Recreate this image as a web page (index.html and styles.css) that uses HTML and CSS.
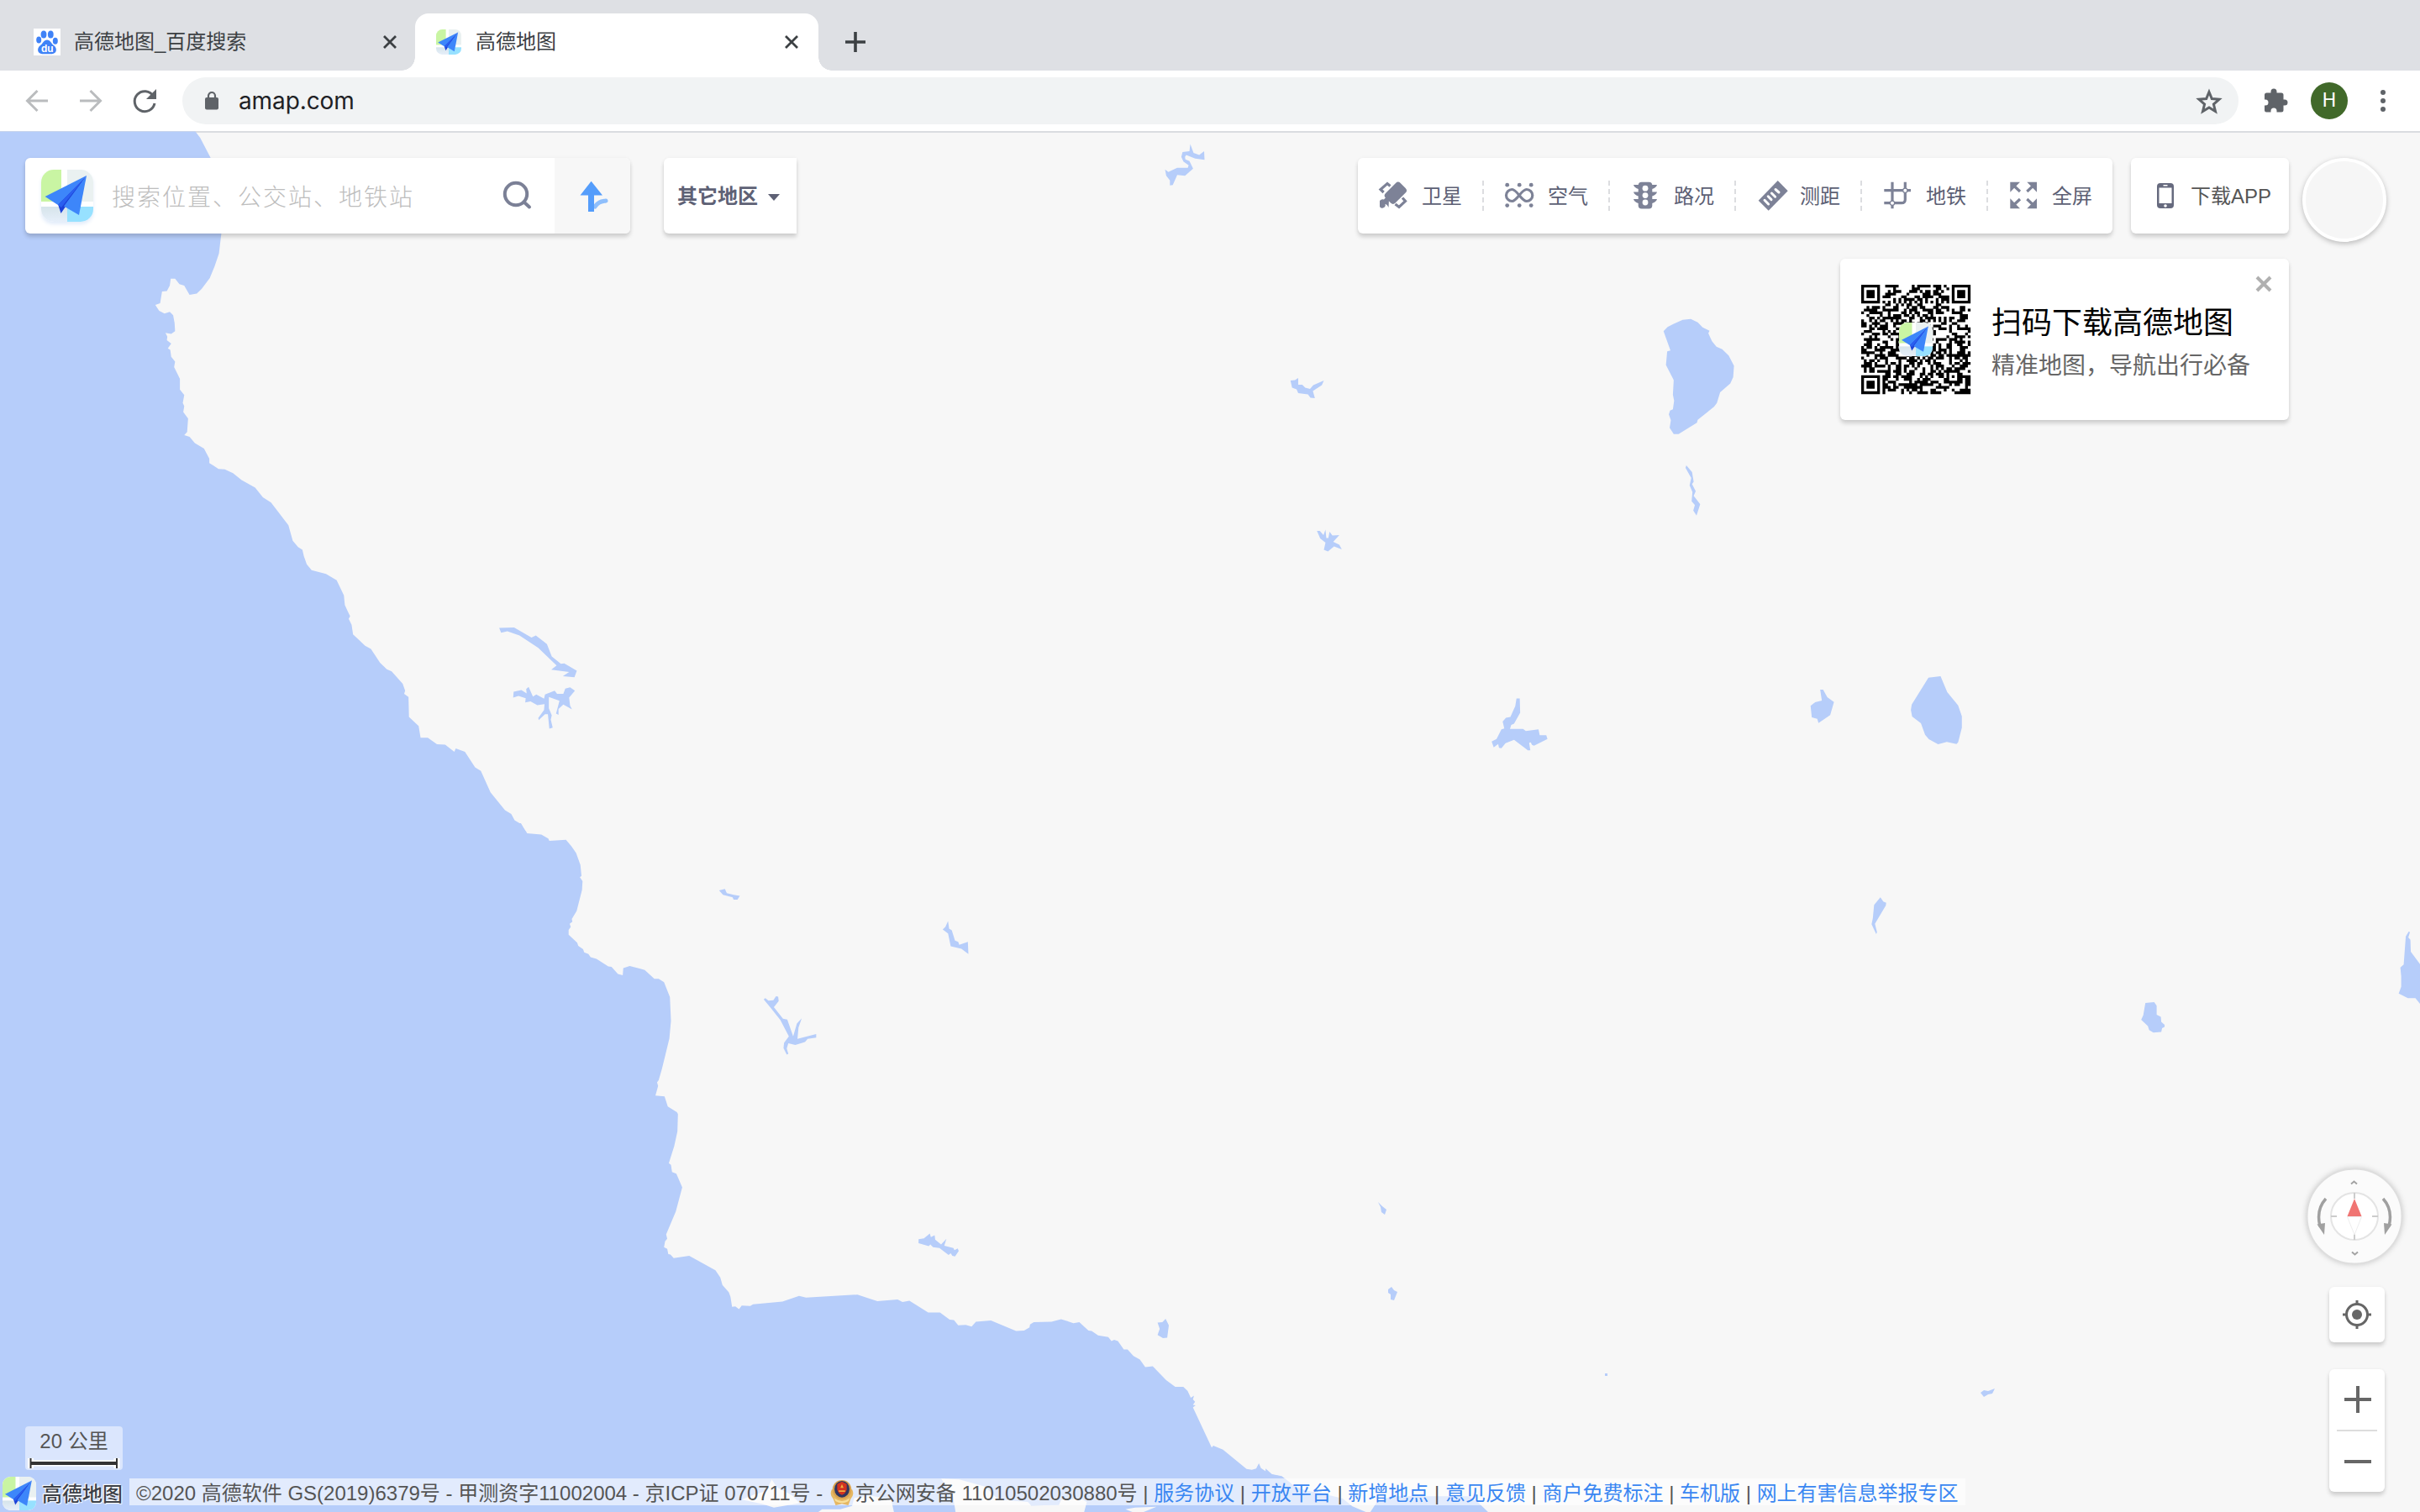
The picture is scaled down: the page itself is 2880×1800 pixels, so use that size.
FILE: index.html
```html
<!DOCTYPE html>
<html lang="zh-CN">
<head>
<meta charset="utf-8">
<title>高德地图</title>
<link rel="stylesheet" href="styles.css">
</head>
<body>
<svg class="defs" aria-hidden="true">
  <defs>
    <clipPath id="tile"><rect width="62" height="62" rx="15"/></clipPath>
    <linearGradient id="tileFade" x1="0" y1="0" x2="0" y2="1"><stop offset="0" stop-color="#d6e4ea"/><stop offset="1" stop-color="#e6effa"/></linearGradient>
    <symbol id="amap" viewBox="0 0 62 62">
      <g clip-path="url(#tile)">
        <rect width="62" height="62" fill="#fff"/>
        <rect width="24" height="38" fill="#c9f5a3"/>
        <rect x="31" width="31" height="38" fill="#eaf1f1"/>
        <rect y="44" width="31" height="18" fill="url(#tileFade)"/>
        <rect x="31" y="44" width="31" height="18" fill="#97e1ff"/>
      </g>
      <path d="M54 7 20 41 23.5 52 29 44Z" fill="#1c41d8"/>
      <path d="M54 7 4.6 32 20 42Z" fill="#3d86fa"/>
      <path d="M54 7 27 43.500 45 54Z" fill="#3d86fa"/>
      <path d="M54 7 20 42 24 45Z" fill="#2a5ff0"/>
    </symbol>
  </defs>
</svg>

<header class="tabs">
  <div class="tab">
    <svg class="favicon" viewBox="0 0 32 32"><rect width="32" height="32" fill="#fff"/><g fill="#3f82f7"><ellipse cx="12" cy="7" rx="3.400" ry="4.500"/><ellipse cx="20.300" cy="7" rx="3.400" ry="4.500"/><ellipse cx="6.200" cy="13.500" rx="3" ry="4"/><ellipse cx="25.800" cy="14.800" rx="3" ry="4"/><path d="M16 13.500C12 13.500 11 18 8 20c-5 4-3 10 2 10.200h12c5-.2 7-6.200 2-10.200-3-2-4-6.500-8-6.500Z"/></g><text class="du" x="16.300" y="27.500" text-anchor="middle">du</text></svg>
    <span class="tab-title">高德地图_百度搜索</span>
    <svg class="close" viewBox="0 0 16 16"><path d="M1 1 15 15M15 1 1 15"/></svg>
  </div>
  <div class="tab active">
    <svg class="favicon" viewBox="0 0 62 62"><use href="#amap"/></svg>
    <span class="tab-title">高德地图</span>
    <svg class="close" viewBox="0 0 16 16"><path d="M1 1 15 15M15 1 1 15"/></svg>
  </div>
  <svg class="newtab" viewBox="0 0 24 24"><path d="M12 0V24M0 12H24"/></svg>
</header>

<nav class="toolbar">
  <svg class="nav-ico dim" viewBox="0 0 28 28"><path d="M27 14H3M14.500 2 2.500 14l12 12"/></svg>
  <svg class="nav-ico dim" viewBox="0 0 28 28"><path d="M1 14H25M13.500 2l12 12-12 12"/></svg>
  <svg class="nav-ico" viewBox="0 0 28 28"><path d="M24.500 8.500A12 12 0 1 0 26 17"/><path d="M28 0V12H16Z" fill="#5f6368" stroke="none"/></svg>
  <div class="address">
    <svg class="lock" viewBox="0 0 16 22"><rect y="7" width="16" height="14.500" rx="2" fill="#5f6368"/><path d="M4 8V5a4 4 0 0 1 8 0v3" fill="none" stroke="#5f6368" stroke-width="2.200"/></svg>
    <span class="url">amap.com</span>
    <svg class="star" viewBox="0 0 30 29"><path d="M15 3.500 18.300 11.600 27 12.300 20.400 18 22.500 26.500 15 22 7.500 26.500 9.600 18 3 12.300 11.700 11.600Z"/></svg>
  </div>
  <svg class="puzzle" viewBox="0 0 30 30"><path d="M2 8a2.500 2.500 0 0 1 2.500-2.500H9.500V4a3.500 3.500 0 0 1 7 0v1.500H22A2.500 2.500 0 0 1 24.500 8v5.500H26a3.500 3.500 0 0 1 0 7H24.500v5.500A2.500 2.500 0 0 1 22 28.500H16.500V27a3.500 3.500 0 0 0-7 0v1.500H4A2.200 2.200 0 0 1 2 26.500V20.500H3a3.500 3.500 0 0 0 0-7H2Z" fill="#5f6368"/></svg>
  <div class="profile">H</div>
  <svg class="menu" viewBox="0 0 6 26"><circle cx="3" cy="3" r="3"/><circle cx="3" cy="13" r="3"/><circle cx="3" cy="23" r="3"/></svg>
</nav>

<main class="map">
  <svg class="canvas" viewBox="0 158 2880 1642">
    <g class="water">
      <!-- coast, north -->
      <path transform="translate(0 150) scale(.57398 .63776)" d="M0 10H405L415 22 437 60 450 120 459 200 454 238 445 262 435 284 418 304 408 313 393 315 382 298 372 295 363 285 354 285 352 298 346 308 336 309 332 331 322 334 330 345 341 350 352 347 359 353 362 368 363 383 355 388 343 386 347 393 346 400 355 406 348 415 353 418 355 431 363 440 361 450 373 472 373 492 382 502 379 517 382 523 380 534 390 546 388 571 382 577 393 580 404 592 423 602 434 621 434 629 453 640 466 641 483 648 501 661 529 675 545 693 562 703 598 745 607 774 618 786 627 791 630 803 636 818 646 829 676 836 698 848 713 876 715 894 722 908 726 915 723 920 729 931 732 949 757 970 769 976 788 1002 802 1014 812 1018 835 1041 840 1054 838 1060 847 1066 848 1103 868 1120 872 1142 887 1142 906 1154 923 1155 942 1168 945 1162 964 1168 985 1197 997 1204 1017 1244 1047 1277 1060 1284 1067 1296 1078 1302 1093 1320H0Z"/>
      <!-- coast, centre and south -->
      <path transform="translate(560 980) scale(.63776 .52296)" d="M-880 0H94L105 23 132 26 145 35 147 40 178 38 188 52 197 68 205 95 207 120 204 123 209 132 208 152 198 200 189 218 190 224 185 229 187 236 183 243 183 254 199 272 201 279 210 287 212 294 220 298 224 305 235 309 257 326 263 327 275 343 284 346 285 330 297 325 325 334 343 354 351 354 361 362 372 396 374 450 371 490 357 560 351 585 348 590 350 598 345 620 362 622 368 645 385 658 387 662 386 702 380 735 370 774 374 778 376 794 384 798 395 829 383 884 365 936 367 946 363 952 361 965 367 969 369 981 373 982 379 990 408 985 457 1018 466 1034 470 1051 482 1068 485 1078 488 1101 494 1100 501 1106 506 1098 522 1099 527 1095 582 1089 613 1076 626 1080 722 1073 759 1088 797 1084 806 1090 819 1087 854 1114 876 1114 894 1130 902 1131 910 1143 924 1142 935 1146 943 1135 971 1132 1018 1156 1033 1155 1043 1148 1044 1141 1051 1136 1084 1135 1102 1129 1125 1138 1136 1136 1153 1155 1159 1156 1171 1166 1190 1170 1196 1179 1201 1176 1208 1179 1219 1198 1226 1198 1237 1213 1249 1221 1259 1238 1273 1236 1298 1268 1315 1283 1330 1283 1338 1292 1344 1308 1350 1303 1348 1312 1352 1317 1348 1324 1353 1325 1348 1330 1383 1421 1386 1417 1404 1426 1448 1470 1458 1472 1466 1469 1471 1457 1475 1468 1492 1482 1514 1487 1530 1502V1568H-880Z"/>
      <path transform="translate(1200 1680) scale(.7653 .3333)" d="M400 205 410 225 425 232 445 268 465 285 485 292 520 312 535 340 556 360H400Z"/>
      <path transform="translate(1200 1680) scale(.7653 .3333)" d="M563 360 575 318 600 304 715 304 730 325 746 360Z"/>
      <!-- reservoirs, west -->
      <g transform="translate(0 150) scale(.57398 .63776)">
        <path d="M1035 937 1066 936 1102 955 1111 951 1134 967 1144 990 1163 1004 1170 1003 1196 1017 1191 1029 1167 1027 1180 1019 1143 1015 1154 1007 1116 974 1077 951 1052 943 1039 946Z"/>
        <path d="M1064 1067 1065 1056 1081 1053 1092 1059 1091 1051 1096 1047 1105 1065 1112 1061 1128 1069 1130 1061 1150 1054 1155 1060 1168 1060 1172 1050 1182 1048 1192 1054 1180 1067 1182 1082 1186 1089 1168 1080 1158 1088 1158 1099 1153 1097 1160 1073 1138 1066 1138 1087 1144 1100 1142 1108 1146 1123 1139 1125 1136 1098 1130 1098 1117 1109 1116 1105 1128 1090 1129 1079 1114 1081 1100 1074 1089 1076 1090 1068 1075 1064Z"/>
        <path d="M1491 1427 1503 1424 1507 1432 1521 1435 1534 1437 1529 1444 1521 1444 1519 1440 1499 1435Z"/>
      </g>
      <g transform="translate(560 980) scale(.63776 .52296)">
        <path d="M891 223 893 240 898 244 904 267 910 270 912 277 928 270 929 298 916 286 896 280 891 251 881 242 886 236Z"/>
        <path d="M547 401 550 398 556 404 565 403 570 394 574 395 575 405 566 419 583 445 591 447 602 485 609 456 618 444 612 465 610 491 645 480 645 488 629 491 624 498 606 505 593 501 590 513 593 525 590 527 584 512 585 500 594 485 578 448 560 420Z"/>
        <path d="M836 947 846 945 857 934 859 942 866 938 867 948 878 959 888 946 884 962 901 967 903 972 909 968 911 974 904 986 899 985 896 979 892 983 875 967 863 965 858 959 855 963 836 956Z"/>
        <path d="M1282 1137 1291 1136 1297 1128 1303 1143 1300 1171 1292 1172 1282 1165 1286 1151Z"/>
      </g>
      <!-- lakes, north -->
      <g transform="translate(1370 160) scale(.48469 .49745)">
        <path d="M34 84 42 90 64 80H90L92 74 79 65 74 54 77 42 94 40 96 23 104 44 118 49 130 40 131 61 108 58 86 49 83 54 84 60 94 64 103 82 83 99 64 97 53 121 46 122 46 110 37 99Z"/>
        <path d="M342 589 353 588 361 583 361 599 371 599 378 606 390 609 398 600 424 589 419 600 397 614 402 631 391 630 385 622 361 619 357 610 346 606Z"/>
        <path d="M407 949H414L423 959 428 946 430 966 435 966 438 951 445 960 462 959 447 975 462 982 468 993 449 986 434 998 424 994 428 977 415 967Z"/>
        <path d="M1258 471 1268 461 1282 454 1305 444 1325 442 1342 450 1354 462 1371 470 1368 476 1377 495 1388 508 1402 514 1418 529 1431 554 1429 581 1422 596 1397 617 1389 643 1382 652 1342 683 1340 690 1295 717H1283L1273 702 1276 684 1271 670 1274 661 1281 658 1284 637 1281 623 1283 588 1264 552 1267 519 1275 517Z"/>
        <path d="M1314 792 1328 808 1332 831 1328 837 1337 854 1332 865 1348 885 1339 912 1331 900 1335 887 1327 878 1329 856 1322 840 1326 822 1312 798Z"/>
        <path d="M897 1350H905L906 1384 891 1410 884 1413 881 1423H913L920 1428 951 1424 954 1438 970 1438 973 1447 940 1463 935 1461 932 1455 928 1456 931 1474 925 1474 891 1449 870 1457 860 1469 854 1468 852 1459 841 1467 836 1453 848 1447 860 1424 867 1422 863 1405 871 1396 882 1394 894 1368Z"/>
      </g>
      <!-- lakes, east -->
      <g transform="translate(2100 780) scale(.49745 .3333)">
        <path d="M133 123H140L150 150 166 167 157 214 129 242 126 227 113 222 110 181 121 168 137 162Z"/>
        <path d="M392 80 421 75 437 132 463 179 472 218V259L463 311 459 317 436 310 415 318 393 300 384 284 374 243 353 219 350 196 352 176Z"/>
        <path d="M277 865 284 880 291 884 290 894 264 959 269 989 267 996 256 961 259 939 262 892Z"/>
        <path d="M911 1242 932 1239 938 1252V1284L948 1292 949 1310 957 1320V1328L951 1332 949 1346 930 1348 920 1339 917 1325 901 1302 906 1286Z"/>
        <path d="M1534 1004 1541 987 1544 989 1540 1008 1545 1016 1546 1059 1568 1103V1245L1557 1225H1539L1517 1208 1523 1184V1147L1521 1115 1529 1105Z"/>
      </g>
      <path d="M1640 1431l5 5 5 4-2 6-4-3-1-6zM1652 1535l4-3 3 4 4 2-2 5-2 5-4-1v-6l-3-2zM1910 1635h3v3h-3zM2357 1658l4-3 5 1 8-3-3 6-5 1-5 3z"/>
    </g>
    <g class="land" transform="translate(560 980) scale(.63776 .52296)">
      <path d="M506 1540 530 1528 552 1520 562 1494 572 1512 600 1530 614 1548 566 1558 545 1550Z"/>
      <path d="M649 1568 656 1562 690 1562 712 1554 716 1536 745 1530 785 1540 790 1568Z" />
      <path d="M878 1492 912 1494 960 1510 985 1540 1040 1545 1046 1553 1098 1552 1102 1540 1140 1538 1150 1545 1145 1568H905L900 1530Z"/>
      <path d="M1222 1562 1240 1558 1280 1556 1256 1568H1235Z"/>
    </g>
  </svg>

  <section class="top">
    <div class="search card">
      <svg class="brand" viewBox="0 0 62 62"><use href="#amap"/></svg>
      <span class="placeholder">搜索位置、公交站、地铁站</span>
      <svg class="glass" viewBox="0 0 36 36"><circle cx="16" cy="16" r="13.200"/><path d="M25.500 25.500 32 31.500"/></svg>
      <div class="route">
        <svg viewBox="0 0 34 38"><path d="M18 31C22 25 26 25 31 24" fill="none" stroke="#8fbffc" stroke-width="5" stroke-linecap="round"/><path d="M13.600 .7 27 17.500H17V37H10V17.500H.5Z" fill="#559dfb"/></svg>
      </div>
    </div>
    <div class="region card"><span class="label">其它地区</span><i class="caret"></i></div>
    <div class="tools card">
      <div class="tool"><svg viewBox="0 0 36 36"><rect x="8.300" y="6.500" width="25" height="16.500" rx="4" transform="rotate(-45 20.800 14.700)"/><path class="line" d="M6.600 14 3 10.500 11 3.500 14.500 6.500M29 20.500 32.500 24.500 25 31.500 20.500 28"/><path d="M2 24Q4 21.500 7 22.500L10 19 13 22 12.500 32Q10.500 28 8.500 28 9.500 31 6 32.500 3 33.500 2 31Z"/></svg><span class="label">卫星</span></div>
      <div class="tool"><svg viewBox="0 0 36 36"><circle cx="3.700" cy="5.200" r="2.400"/><circle cx="18.200" cy="5.200" r="2.400"/><circle cx="32.200" cy="5.200" r="2.400"/><circle cx="3.700" cy="29.600" r="2.400"/><circle cx="18.200" cy="29.600" r="2.400"/><circle cx="32.200" cy="29.600" r="2.400"/><path class="line" d="M18 17.500C14 22.500 12 24.500 9.500 24.500A7 7 0 0 1 9.500 10.500C12 10.500 14 12.500 18 17.500S24 24.500 26.800 24.500A7 7 0 0 0 26.800 10.500C24 10.500 22 12.500 18 17.500Z"/></svg><span class="label">空气</span></div>
      <div class="tool"><svg viewBox="0 0 36 36"><rect x="9.700" y="1.700" width="16.600" height="31.800" rx="4"/><path d="M4 5H32Q31 8.500 26 10V13.500H32Q31 17 26 18.500V22H32Q31 25.500 26 27H10Q5 25.500 4 22H10V18.500Q5 17 4 13.500H10V10Q5 8.500 4 5Z"/><g fill="#fff"><circle cx="18" cy="9.200" r="3.400"/><circle cx="18" cy="17.600" r="3.400"/><circle cx="18" cy="26" r="3.400"/></g></svg><span class="label">路况</span></div>
      <div class="tool"><svg viewBox="0 0 36 36"><path d="M25.700 0 37.700 12.300 14.700 35.700 2.700 23.700Z"/><path class="line white" d="M10 23.300 14.600 28M14.200 18.800 18 22.600M18.400 15 22.600 19.200M23 10.500 27 14"/></svg><span class="label">测距</span></div>
      <div class="tool"><svg viewBox="0 0 36 36"><path class="line" d="M12 1.700V33.300M2.300 11.700H34M27.300 1.700V22.500Q27.300 26.700 23 26.700H2.300"/><g class="node"><circle cx="27.300" cy="11.700" r="2.600"/><circle cx="12" cy="26.700" r="2.600"/></g></svg><span class="label">地铁</span></div>
      <div class="tool"><svg viewBox="0 0 36 36"><path d="M2.300 1.700H14L2.300 13.700ZM34 1.700H22.300L34 13.700ZM2.300 33.300H14L2.300 21.300ZM34 33.300H22.300L34 21.300Z"/><path class="line" d="M6 5.500 14 13M30.300 5.500 22.300 13M6 29.500 14 22M30.300 29.500 22.300 22"/></svg><span class="label">全屏</span></div>
    </div>
    <div class="download card">
      <svg class="phone" viewBox="0 0 20 30"><rect width="20" height="30" rx="4" fill="#666a7e"/><rect x="2.500" y="5.500" width="15" height="18.500" fill="#fff"/><circle cx="10" cy="27" r="1.800" fill="#fff"/><rect x="7.500" y="2" width="5" height="1.500" fill="#fff"/></svg>
      <span class="label">下载APP</span>
    </div>
    <div class="user"></div>
  </section>

  <aside class="promo card">
    <svg class="qr" id="qr" viewBox="0 0 41 41"></svg>
    <div class="promo-text">
      <strong>扫码下载高德地图</strong>
      <span>精准地图，导航出行必备</span>
    </div>
    <svg class="promo-close" viewBox="0 0 20 20"><path d="M2 2 18 18M18 2 2 18"/></svg>
  </aside>

  <div class="controls">
    <svg class="compass" viewBox="0 0 120 120">
      <circle cx="60" cy="60" r="56.500" fill="#fbfbfb" stroke="#dedede" stroke-width="2"/>
      <circle cx="60" cy="60" r="28" fill="#fff" stroke="#e4e4e4" stroke-width="2"/>
      <path d="M60 32v7M60 81v7M32 60h7M81 60h7" stroke="#ccc" stroke-width="2"/>
      <path d="M60 39 68.500 60H51.500Z" fill="#f07573"/>
      <path d="M51.500 60.500H68.500L60 82Z" fill="#fff" stroke="#eee"/>
      <path d="M56 21.500 59.500 18.500 63 21.500M57 102.500 60.500 105.500 64 102.500" fill="none" stroke="#a3a3a3" stroke-width="2"/>
      <path d="M26 39Q14 52 19 72M94 39Q106 52 101 72" fill="none" stroke="#a0a0a0" stroke-width="3.500"/>
      <path d="M15.500 69.500 25 68 24 82ZM104.500 69.500 95 68 96 82Z" fill="#a0a0a0"/>
    </svg>
    <div class="locate card"><svg viewBox="0 0 34 34"><circle cx="17" cy="17" r="12.500"/><path d="M17 0V5M17 29V34M0 17H5M29 17H34"/><circle cx="17" cy="17" r="6" class="dot"/></svg></div>
    <div class="zoom card">
      <svg viewBox="0 0 32 32"><path d="M16 0V32M0 16H32"/></svg>
      <i class="rule"></i>
      <svg viewBox="0 0 32 32"><path d="M0 16H32"/></svg>
    </div>
  </div>

  <div class="scale">
    <span>20 公里</span>
    <svg viewBox="0 0 108 14"><path d="M3 7H105M2.500 1V13M105 1V13" stroke="#fff" stroke-width="7"/><path d="M2 7H105" stroke="#333" stroke-width="4"/><path d="M2.500 1V13M105 1V13" stroke="#333" stroke-width="2"/></svg>
  </div>

  <footer class="foot">
    <svg class="foot-logo" viewBox="0 0 62 62"><use href="#amap"/></svg>
    <span class="wordmark">高德地图</span>
    <p class="legal">©2020 高德软件 GS(2019)6379号 - 甲测资字11002004 - 京ICP证 070711号 - <svg class="badge" viewBox="0 0 32 34"><path d="M3 13Q0 20 5 25L8 33 16 31 24 33 27 25Q32 20 29 13Z" fill="#e5b763"/><circle cx="16" cy="13" r="12" fill="#d9a24e"/><ellipse cx="16" cy="12.500" rx="9.500" ry="10.500" fill="#30365f"/><path d="M16 3 22 6V13Q21 18 16 20 11 18 10 13V6Z" fill="#d2331f"/><path d="M16 6 18 11H14ZM12 14H20V16H12Z" fill="#f0b040"/><path d="M6 24Q16 31 26 24L24 28Q16 32 8 28Z" fill="#f8df9a"/></svg>京公网安备 11010502030880号 | <a>服务协议</a> | <a>开放平台</a> | <a>新增地点</a> | <a>意见反馈</a> | <a>商户免费标注</a> | <a>车机版</a> | <a>网上有害信息举报专区</a></p>
  </footer>
</main>
<script src="qr.js"></script>
</body>
</html>
```
FILE: qr.js
```js
// Draws the download code: finder squares, timing marks, data modules and the brand tile.
(function () {
  var n = 41, seed = 90217, d = '';
  function rnd() { seed = (seed * 1103515245 + 12345) % 2147483648; return seed / 2147483648; }
  function finder(x, y, fx, fy) {
    var dx = Math.abs(x - fx - 3), dy = Math.abs(y - fy - 3), m = Math.max(dx, dy);
    return m > 4 ? null : m === 3 || m < 2;
  }
  for (var y = 0; y < n; y++) {
    for (var x = 0; x < n; x++) {
      var on = rnd() > 0.46, f = null;
      [[0, 0], [n - 7, 0], [0, n - 7]].forEach(function (p) {
        var v = finder(x, y, p[0], p[1]);
        if (v !== null) f = v;
      });
      if (f === null && (x === 6 || y === 6)) f = (x + y) % 2 === 0;
      var a = Math.max(Math.abs(x - 34), Math.abs(y - 34));
      if (f === null && a < 3) f = a !== 1;
      if (f !== null) on = f;
      if (on) d += 'M' + x + ' ' + y + 'h1.04v1.04h-1.04z';
    }
  }
  document.getElementById('qr').innerHTML = '<path d="' + d + '"/><use href="#amap" x="14.200" y="14.200" width="12.600" height="12.600"/>';
})();
```
FILE: styles.css
```css
* { box-sizing: border-box; }
body {
  margin: 0;
  width: 2880px;
  height: 1800px;
  overflow: hidden;
  display: flex;
  flex-direction: column;
  background: #f7f7f7;
  font-family: "Liberation Sans", "Noto Sans CJK SC", sans-serif;
  font-size: 24px;
}
svg { display: block; overflow: visible; flex: none; }
.defs { width: 0; height: 0; position: absolute; }

/* tab strip */
.tabs {
  height: 84px;
  background: #dee0e4;
  display: flex;
  align-items: flex-end;
}
.tab {
  display: flex;
  align-items: center;
  height: 68px;
  width: 494px;
  padding: 0 22px 0 40px;
  color: #3c4043;
}
.tab.active {
  position: relative;
  width: 480px;
  padding: 0 24px 0 25px;
  background: #fff;
  border-radius: 16px 16px 0 0;
}
.tab.active::before, .tab.active::after {
  content: "";
  position: absolute;
  bottom: 0;
  width: 16px;
  height: 16px;
}
.tab.active::before { left: -16px; background: radial-gradient(circle at 0 0, transparent 15.5px, #fff 16px); }
.tab.active::after { right: -16px; background: radial-gradient(circle at 100% 0, transparent 15.5px, #fff 16px); }
.favicon { width: 32px; height: 32px; }
.tab.active .favicon { width: 30px; height: 30px; margin-right: 1px; }
.du { font: bold 12px "Liberation Sans", sans-serif; fill: #fff; }
.tab-title { margin-left: 16px; line-height: 36px; }
.close { width: 16px; height: 16px; margin-left: auto; stroke: #3c4043; stroke-width: 2.8; }
.newtab { width: 24px; height: 24px; margin: 0 0 22px 32px; stroke: #3c4043; stroke-width: 3.6; }

/* address bar */
.toolbar {
  height: 74px;
  padding: 0 41px 0 30px;
  display: flex;
  align-items: center;
  background: #fff;
  border-bottom: 2px solid #dadce0;
}
.nav-ico { width: 28px; height: 28px; margin-right: 36px; fill: none; stroke: #5f6368; stroke-width: 3; }
.nav-ico.dim { stroke: #babcbe; }
.address {
  width: 2447px;
  height: 56px;
  margin-left: -5px;
  padding: 0 20px 0 27px;
  border-radius: 28px;
  background: #f1f3f4;
  display: flex;
  align-items: center;
}
.lock { width: 16px; height: 22px; }
.url { margin-left: 24px; font: 28px/40px Inter, Roboto, sans-serif; color: #202124; letter-spacing: -.1px; }
.star { width: 30px; height: 29px; margin-left: auto; fill: none; stroke: #5f6368; stroke-width: 3; }
.puzzle { width: 30px; height: 30px; margin-left: 29px; }
.profile {
  width: 44px;
  height: 44px;
  margin-left: 27px;
  border-radius: 50%;
  background: #41692a;
  color: #fff;
  font: 23px/44px Roboto, sans-serif;
  text-align: center;
}
.menu { width: 6px; height: 26px; margin-left: auto; fill: #5f6368; }

/* map */
.map { position: relative; height: 1642px; }
.canvas { position: absolute; inset: 0; width: 2880px; height: 1642px; }
.water { fill: #b6cdfa; }
.land { fill: #f7f7f7; }
.card { background: #fff; border-radius: 6px; box-shadow: 0 4px 5px rgba(0, 0, 0, .16), 0 0 4px rgba(0, 0, 0, .04); }
.label { padding-bottom: 3px; }

.top {
  position: relative;
  display: flex;
  align-items: flex-start;
  padding: 30px 40px 0 30px;
}
.search { width: 720px; height: 90px; display: flex; align-items: center; padding-left: 19px; }
.brand { width: 62px; height: 62px; filter: drop-shadow(0 3px 2px #e2ecfa); }
.placeholder {
  margin-left: 22px;
  font: 300 28px/40px "Noto Sans CJK SC", sans-serif;
  letter-spacing: 2px;
  color: #bdbdbd;
}
.glass { width: 36px; height: 36px; margin: 0 26px 0 auto; fill: none; stroke: #7b8096; stroke-width: 4; stroke-linecap: round; }
.route { width: 90px; height: 90px; background: #f7f7f7; border-radius: 0 6px 6px 0; display: flex; align-items: center; padding: 2px 0 0 30px; }
.route svg { width: 34px; height: 38px; }
.region {
  width: 158px;
  height: 90px;
  margin-left: 40px;
  padding-left: 16px;
  display: flex;
  align-items: center;
  border-radius: 6px 0 0 6px;
  font-weight: 700;
  color: #5e6175;
}
.caret { margin: 3px 0 0 12px; border: 7px solid transparent; border-top: 8px solid #5e6175; border-bottom: 0; }
.tools { width: 898px; height: 90px; margin-left: auto; display: flex; align-items: center; color: #5c6074; }
.tool {
  width: 150px;
  height: 36px;
  flex: none;
  display: flex;
  align-items: center;
  gap: 16px;
  padding-left: 24px;
  background: repeating-linear-gradient(#dcdde0 0 6px, transparent 6px 10px) 148px 0 / 2px 36px no-repeat;
}
.tool:last-child { background: none; width: 148px; }
.tool svg { width: 36px; height: 36px; fill: #7d8297; }
.tool .line { fill: none; stroke: #7d8297; stroke-width: 3.2; }
.tool .white { stroke: #fff; stroke-width: 3; stroke-linecap: round; }
.tool .node { fill: #fff; stroke: #7d8297; stroke-width: 1.2; }
.download { width: 188px; height: 90px; margin-left: 22px; padding-left: 31px; display: flex; align-items: center; gap: 20px; color: #555; }
.phone { width: 20px; height: 30px; }
.user {
  width: 100px;
  height: 100px;
  margin-left: 16px;
  border: 4px solid #fff;
  border-radius: 50%;
  background: #f6f6f6;
  box-shadow: 0 2px 6px rgba(0, 0, 0, .25);
}

.promo {
  position: relative;
  width: 534px;
  height: 192px;
  margin: 20px 156px 0 auto;
  padding: 31px 20px 31px 25px;
  display: flex;
  font-family: "Noto Sans CJK SC", sans-serif;
}
.qr { width: 130px; height: 130px; }
.promo-text { margin-left: 25px; padding-top: 16px; display: flex; flex-direction: column; }
.promo-text strong { font-weight: 400; font-size: 36px; line-height: 52px; color: #000; }
.promo-text span { margin-top: 2px; font-size: 28px; line-height: 48px; color: #666; white-space: nowrap; }
.promo-close { position: absolute; top: 20px; right: 20px; width: 20px; height: 20px; stroke: #b0b0b0; stroke-width: 4; }

.controls { position: absolute; right: 42px; bottom: 24px; display: flex; flex-direction: column; align-items: flex-end; }
.compass { width: 120px; height: 120px; margin: 0 -24px 24px 0; filter: drop-shadow(0 0 3px rgba(0, 0, 0, .18)); }
.locate { width: 66px; height: 66px; padding: 16px; }
.locate svg { width: 34px; height: 34px; fill: none; stroke: #666; stroke-width: 3; }
.locate .dot { fill: #666; stroke: none; }
.zoom { width: 66px; height: 146px; margin-top: 32px; padding-top: 20px; display: flex; flex-direction: column; align-items: center; }
.zoom svg { width: 32px; height: 32px; margin-left: 2px; stroke: #666; stroke-width: 4; }
.rule { width: 48px; height: 2px; margin: 20px 0; background: #ddd; }

.scale {
  position: absolute;
  left: 30px;
  bottom: 50px;
  width: 116px;
  height: 52px;
  border-radius: 4px;
  background: rgba(255, 255, 255, .5);
  color: #555;
  display: flex;
  flex-direction: column;
  align-items: center;
}
.scale span { line-height: 36px; }
.scale svg { width: 108px; height: 14px; margin: 1px 1px 0 0; }

.foot { position: absolute; left: 3px; bottom: 2px; height: 40px; display: flex; align-items: center; }
.foot-logo { width: 40px; height: 40px; }
.wordmark { width: 104px; margin-left: 7px; padding-bottom: 3px; font-weight: 500; color: #3d4148; text-shadow: 0 0 2px #fff, 1px 1px 1px #fff, -1px -1px 1px #fff; }
.legal {
  margin: -4px 0 0;
  height: 32px;
  padding: 0 8px;
  background: rgba(255, 255, 255, .6);
  color: #555;
  line-height: 36px;
  white-space: nowrap;
}
.legal a { color: #3a87f2; }
.badge { display: inline-block; width: 32px; height: 32px; vertical-align: -7px; }
```
